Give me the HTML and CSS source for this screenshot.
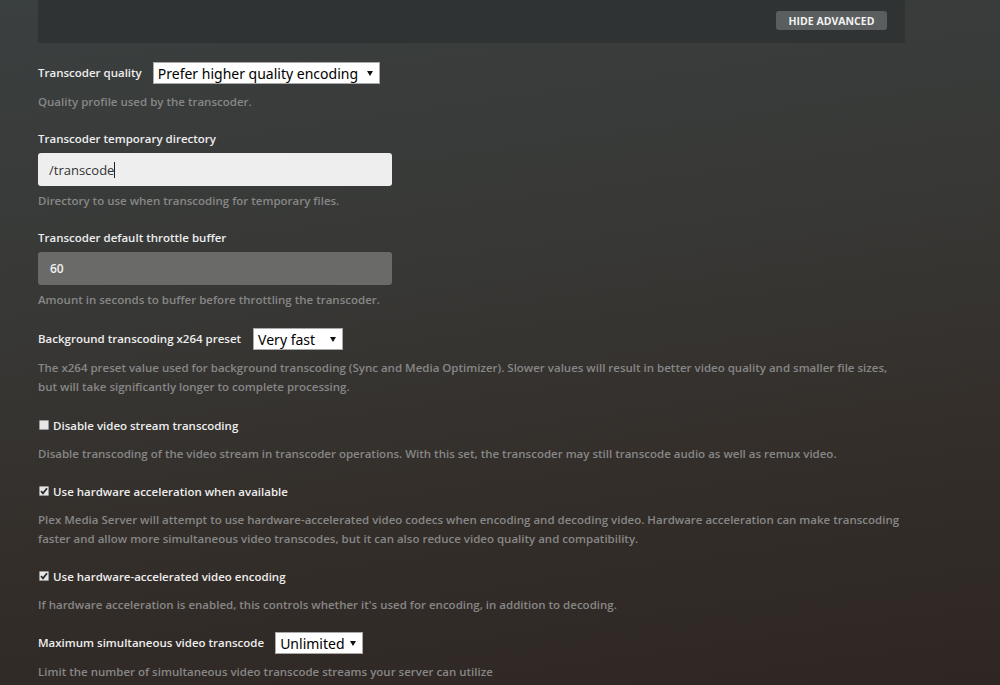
FILE: index.html
```html
<!DOCTYPE html>
<html lang="en">
<head>
    <meta charset="UTF-8">
    <meta name="viewport" content="width=device-width, initial-scale=1.0">
    <title>Transcoder settings</title>
    <link rel="stylesheet" href="styles.css">
</head>
<body>
    <div class="page">
        <div class="advanced-bar">
            <button class="advanced-btn">Hide Advanced</button>
        </div>

        <!-- Transcoder quality -->
        <div class="setting">
            <div class="inline-row">
                <span class="label">Transcoder quality</span>
                <div class="select select-quality">
                    <span>Prefer higher quality encoding</span>
                    <span class="arrow"></span>
                </div>
            </div>
            <p class="desc">Quality profile used by the transcoder.</p>
        </div>

        <div class="setting">
            <div class="label block">Transcoder temporary directory</div>
            <div class="text-input">/transcode<span class="caret"></span></div>
            <p class="desc desc-input">Directory to use when transcoding for temporary files.</p>
        </div>

        <div class="setting">
            <div class="label block">Transcoder default throttle buffer</div>
            <div class="text-input disabled">60</div>
            <p class="desc desc-input">Amount in seconds to buffer before throttling the transcoder.</p>
        </div>

        <div class="setting">
            <div class="inline-row">
                <span class="label">Background transcoding x264 preset</span>
                <div class="select select-preset">
                    <span>Very fast</span>
                    <span class="arrow"></span>
                </div>
            </div>
            <p class="desc">The x264 preset value used for background transcoding (Sync and Media Optimizer). Slower values will result in better video quality and smaller file sizes, but will take significantly longer to complete processing.</p>
        </div>

        <!-- Checkbox settings -->
        <div class="setting check-setting">
            <div class="inline-row check-row">
                <span class="checkbox"></span>
                <span class="label">Disable video stream transcoding</span>
            </div>
            <p class="desc">Disable transcoding of the video stream in transcoder operations. With this set, the transcoder may still transcode audio as well as remux video.</p>
        </div>

        <div class="setting check-setting">
            <div class="inline-row check-row">
                <span class="checkbox checked">
                    <svg width="8" height="8" viewBox="0 0 8 8"><path d="M1 4.2 L3 6.3 L7 1.2" fill="none" stroke="#2a2a2a" stroke-width="1.8"/></svg>
                </span>
                <span class="label">Use hardware acceleration when available</span>
            </div>
            <p class="desc">Plex Media Server will attempt to use hardware-accelerated video codecs when encoding and decoding video. Hardware acceleration can make transcoding faster and allow more simultaneous video transcodes, but it can also reduce video quality and compatibility.</p>
        </div>

        <div class="setting check-setting">
            <div class="inline-row check-row">
                <span class="checkbox checked">
                    <svg width="8" height="8" viewBox="0 0 8 8"><path d="M1 4.2 L3 6.3 L7 1.2" fill="none" stroke="#2a2a2a" stroke-width="1.8"/></svg>
                </span>
                <span class="label">Use hardware-accelerated video encoding</span>
            </div>
            <p class="desc">If hardware acceleration is enabled, this controls whether it's used for encoding, in addition to decoding.</p>
        </div>

        <div class="setting">
            <div class="inline-row">
                <span class="label">Maximum simultaneous video transcode</span>
                <div class="select select-max">
                    <span>Unlimited</span>
                    <span class="arrow"></span>
                </div>
            </div>
            <p class="desc">Limit the number of simultaneous video transcode streams your server can utilize</p>
        </div>
    </div>
</body>
</html>
```

FILE: styles.css
```css
body, html {
    margin: 0;
    height: 100%;
    overflow: hidden;
}

body {
    background: linear-gradient(172deg, #3a3f3f 0%, #383937 35%, #342f2b 65%, #2e2622 100%);
    font-family: "Open Sans", "Noto Sans", sans-serif;
    font-size: 11.5px;
}

.page {
    width: 867px;
    margin-left: 38px;
}

.advanced-bar {
    height: 43px;
    background-color: #2f3333;
    display: flex;
    justify-content: flex-end;
    align-items: flex-start;
    padding-right: 18px;
    box-sizing: border-box;
    margin-bottom: 19px;
}

.advanced-btn {
    margin-top: 11px;
    width: 111px;
    height: 19px;
    border: none;
    border-radius: 3px;
    background-color: #5a5e5e;
    color: #f2f2f2;
    font-family: "Open Sans", sans-serif;
    font-size: 10.5px;
    font-weight: 700;
    text-transform: uppercase;
    padding: 0;
    line-height: 18px;
}

.setting {
    margin-bottom: 19px;
}

.check-setting {
    margin-bottom: 18px;
}

.label {
    color: #eeeeee;
    font-weight: 600;
    line-height: 18px;
}

.label.block {
    display: block;
    margin-bottom: 5px;
}

.inline-row {
    display: flex;
    align-items: center;
    height: 22px;
}

.check-row {
    height: 21px;
}

.select {
    margin-left: 11px;
    height: 22px;
    box-sizing: border-box;
    background-color: #ffffff;
    border: 1px solid #a9a9a9;
    display: flex;
    align-items: center;
    justify-content: space-between;
    padding: 0 6px 0 4px;
    font-family: "Noto Sans", "Open Sans", sans-serif;
    font-size: 14px;
    color: #000;
    white-space: nowrap;
}

.select-quality { width: 227px; }
.select-preset { width: 90px; margin-left: 12px; }
.select-max { width: 88px; }

.arrow {
    width: 0;
    height: 0;
    border-left: 3px solid transparent;
    border-right: 3px solid transparent;
    border-top: 5px solid #111;
}

.text-input {
    width: 354px;
    height: 33px;
    box-sizing: border-box;
    border-radius: 3px;
    background-color: #eeeeee;
    color: #333;
    font-size: 13px;
    padding-left: 11px;
    display: flex;
    align-items: center;
}

.text-input.disabled {
    background-color: #6a6b69;
    color: #f0f0f0;
    font-weight: 600;
    font-size: 12px;
    padding-left: 12px;
}

.caret {
    display: inline-block;
    width: 1px;
    height: 16px;
    background-color: #222;
}

.desc {
    margin: 8px 0 0 0;
    color: #878787;
    font-weight: 600;
    line-height: 19px;
}

.desc-input {
    margin-top: 5px;
}

.checkbox {
    width: 10px;
    height: 10px;
    box-sizing: border-box;
    margin: 0 4px 0 1px;
    background-color: #e6e6e6;
    border: 1px solid #9a9a9a;
    border-radius: 1px;
    display: flex;
    align-items: center;
    justify-content: center;
    position: relative;
    top: -1px;
}

.checkbox svg {
    display: block;
}
```
